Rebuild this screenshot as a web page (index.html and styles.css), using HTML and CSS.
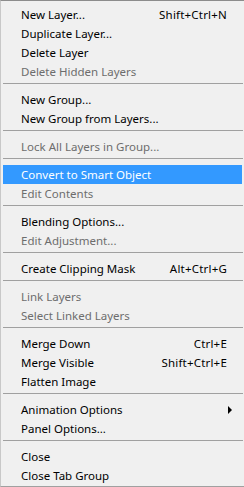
FILE: index.html
```html
<!DOCTYPE html>
<html lang="en">
  <head>
    <meta charset="UTF-8" />
    <title>Layers menu</title>
    <link rel="stylesheet" href="styles.css">
  </head>
  <body>
    <div class="menu">
      <div class="item"><span>New Layer...</span><span class="key">Shift+Ctrl+N</span></div>
      <div class="item"><span>Duplicate Layer...</span></div>
      <div class="item"><span>Delete Layer</span></div>
      <div class="item disabled"><span>Delete Hidden Layers</span></div>
      <div class="sep"></div>
      <div class="item"><span>New Group...</span></div>
      <div class="item"><span>New Group from Layers...</span></div>
      <div class="sep"></div>
      <div class="item disabled"><span>Lock All Layers in Group...</span></div>
      <div class="sep"></div>
      <div class="item active"><span>Convert to Smart Object</span></div>
      <div class="item disabled"><span>Edit Contents</span></div>
      <div class="sep"></div>
      <div class="item"><span>Blending Options...</span></div>
      <div class="item disabled"><span>Edit Adjustment...</span></div>
      <div class="sep"></div>
      <div class="item"><span>Create Clipping Mask</span><span class="key">Alt+Ctrl+G</span></div>
      <div class="sep"></div>
      <div class="item disabled"><span>Link Layers</span></div>
      <div class="item disabled"><span>Select Linked Layers</span></div>
      <div class="sep"></div>
      <div class="item"><span>Merge Down</span><span class="key">Ctrl+E</span></div>
      <div class="item"><span>Merge Visible</span><span class="key">Shift+Ctrl+E</span></div>
      <div class="item"><span>Flatten Image</span></div>
      <div class="sep"></div>
      <div class="item sub"><span>Animation Options</span><span class="arrow"></span></div>
      <div class="item"><span>Panel Options...</span></div>
      <div class="sep"></div>
      <div class="item"><span>Close</span></div>
      <div class="item"><span>Close Tab Group</span></div>
    </div>
  </body>
</html>
```

FILE: styles.css
```css
body {
  margin: 0;
  font-family: "Noto Sans", sans-serif;
  font-size: 11.5px;
}

.menu {
  width: 244px;
  height: 487px;
  box-sizing: border-box;
  background: #f0f0f0;
  border-top: 1px solid #8c8c8c;
  border-bottom: 1px solid #a0a0a0;
  border-left: 1px solid #c8c8c8;
  padding-top: 4px;
}

.item {
  display: flex;
  justify-content: space-between;
  align-items: center;
  height: 19px;
  line-height: 19px;
  margin: 0 2px;
  padding: 0 15px 0 18px;
  color: #000;
  white-space: nowrap;
}

.key {
  letter-spacing: 0.2px;
}

.item.disabled {
  color: #6d6d6d;
}

.item.active {
  background: #3399ff;
  color: #fff;
}

.sep {
  height: 9px;
  box-sizing: border-box;
  padding-top: 2px;
  margin: 0 1px 0 2px;
}
.sep::before {
  content: "";
  display: block;
  height: 1px;
  background: #a0a0a0;
}

.arrow {
  width: 0;
  height: 0;
  border-top: 4px solid transparent;
  border-bottom: 4px solid transparent;
  border-left: 4px solid #000;
  margin-right: -5px;
}
```
